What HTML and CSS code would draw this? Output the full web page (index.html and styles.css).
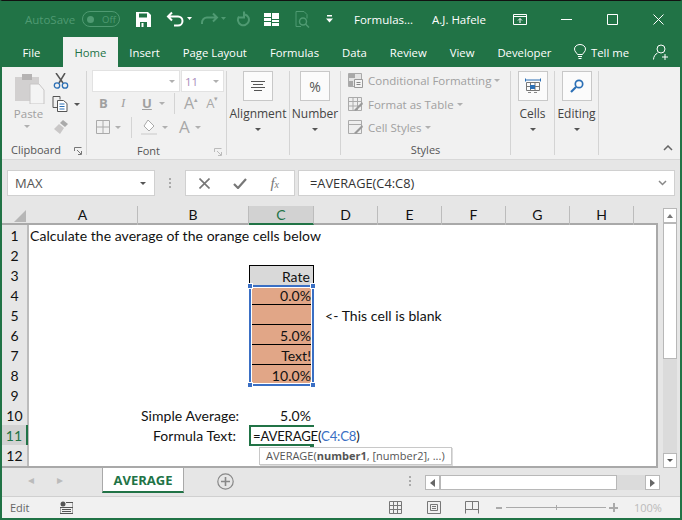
FILE: index.html
```html
<!DOCTYPE html>
<html lang="en">
<head>
    <meta charset="UTF-8">
    <title>Formulas - AVERAGE</title>
    <link rel="stylesheet" href="styles.css">
</head>
<body>
<div class="app">
    <div class="titlebar">
        <span class="autosave">AutoSave</span>
        <span class="toggle"><i></i>Off</span>
        <svg class="qat save" width="15" height="15" viewBox="0 0 15 15"><path d="M0 0h12l3 3v12H0z" fill="#fff"/><path d="M3 1.500h8v4H3zM4 10h7v5H4z" fill="#217346"/><path d="M5.500 11h2v4h-2z" fill="#fff"/></svg>
        <svg class="qat undo" width="26" height="16" viewBox="0 0 26 16"><path d="M6 1.500 2 5.500l4 4M2 5.500h10a4.500 4.500 0 0 1 0 9H8" fill="none" stroke="#fff" stroke-width="2"/><path d="M21 6h5l-2.500 3z" fill="#fff"/></svg>
        <svg class="qat redo" width="26" height="16" viewBox="0 0 26 16"><path d="M13 2.500l4 4-4 4M17 6.500H7a5 5 0 0 0-5 5V13" fill="none" stroke="#4f9a72" stroke-width="2"/><path d="M21 6h5l-2.500 3z" fill="#4f9a72"/></svg>
        <svg class="qat repeat" width="14" height="16" viewBox="0 0 14 16"><path d="M9 3.500a5.500 5.500 0 1 1-6 2M8 .5v6H2" fill="none" stroke="#4f9a72" stroke-width="2"/></svg>
        <svg class="qat grid4" width="15" height="13" viewBox="0 0 15 13"><path d="M0 0h7v4H0zM8 0h7v6H8zM0 5h7v3H0zM0 9h7v4H0zM8 7h7v2H8zM8 10h7v3H8z" fill="#fff"/></svg>
        <svg class="qat preview" width="15" height="17" viewBox="0 0 15 17"><path d="M1 .5h8l3 3v4M1 .5v15h5" fill="none" stroke="#4f9a72"/><circle cx="8" cy="10.500" r="3.500" fill="none" stroke="#4f9a72" stroke-width="1.500"/><path d="M10.500 13l3.500 3.500" stroke="#4f9a72" stroke-width="1.500"/></svg>
        <svg class="qat custom" width="7" height="8" viewBox="0 0 7 8"><path d="M1 0h5v1.500H1zM0 3.500h7L3.500 7.500z" fill="#fff"/></svg>
        <span class="doc-name">Formulas...</span>
        <span class="user-name">A.J. Hafele</span>
        <svg class="win ribbon-opts" width="14" height="11" viewBox="0 0 14 11"><path d="M.5.500h13v10H.5zM.5 2.500h13M7 9V4.500M5 6.500l2-2 2 2" fill="none" stroke="#fff"/></svg>
        <svg class="win minimize" width="11" height="11" viewBox="0 0 11 11"><path d="M0 5.500h11" stroke="#fff"/></svg>
        <svg class="win maximize" width="11" height="11" viewBox="0 0 11 11"><path d="M.5.500h10v10H.5z" fill="none" stroke="#fff"/></svg>
        <svg class="win close" width="11" height="11" viewBox="0 0 11 11"><path d="M.5.500l10 10M10.500.5l-10 10" stroke="#fff"/></svg>
    </div>

    <div class="tabs">
        <span class="tab first">File</span>
        <span class="tab active">Home</span>
        <span class="tab">Insert</span>
        <span class="tab">Page Layout</span>
        <span class="tab">Formulas</span>
        <span class="tab">Data</span>
        <span class="tab">Review</span>
        <span class="tab">View</span>
        <span class="tab">Developer</span>
        <svg class="bulb" width="12" height="16" viewBox="0 0 12 16"><path d="M3.500 10.500C2.500 8.500.5 7.500.5 5a5.500 4.500 0 0 1 11 0c0 2.500-2 3.500-3 5.500zM4 12.500h4M4.500 14.500h3" fill="none" stroke="#fff"/></svg>
        <span class="tell">Tell me</span>
        <svg class="person" width="16" height="16" viewBox="0 0 16 16"><circle cx="8" cy="5" r="4" fill="none" stroke="#fff"/><path d="M.5 15.500c0-3 2-5.500 4-6.500M9 13h6M12 10v6" fill="none" stroke="#fff"/></svg>
    </div>

    <div class="ribbon">
        <div class="group clipboard">
            <div class="group-body clip-body">
                <div class="paste">
                    <svg width="30" height="31" viewBox="0 0 30 31"><path d="M0 4h24v24H0z" fill="#d2d0d0"/><path d="M7 1h10v6H7z" fill="#b5b3b3"/><path d="M15 11h9l5 6v14H15z" fill="#f4f4f4" stroke="#c8c6c6"/></svg>
                    <span>Paste</span>
                    <i class="caret light"></i>
                </div>
                <div class="clip-tools">
                    <svg width="16" height="16" viewBox="0 0 16 16"><path d="M3 0l7 10M12 0L6 10" stroke="#555" stroke-width="1.500"/><circle cx="4" cy="12.500" r="2.700" fill="none" stroke="#2b6fb5" stroke-width="1.300"/><circle cx="12" cy="12.500" r="2.700" fill="none" stroke="#2b6fb5" stroke-width="1.300"/></svg>
                    <div class="copy-row">
                        <svg width="16" height="16" viewBox="0 0 16 16"><path d="M1 .5h7v3M1 .5v11h4" fill="none" stroke="#555"/><path d="M5.500 4.500h6l3.500 3v8H5.500z" fill="#fff" stroke="#555"/><path d="M7.500 8h5M7.500 10.500h5M7.500 13h5" stroke="#2b6fb5"/></svg>
                        <i class="caret"></i>
                    </div>
                    <svg width="16" height="16" viewBox="0 0 16 16"><path d="M10 1l5 4-3 3-5-4z" fill="#aaa"/><path d="M6 5l5 4-4 6-6-5z" fill="#c9c7c7"/></svg>
                </div>
            </div>
            <div class="group-label">Clipboard<svg class="launcher" width="8" height="8" viewBox="0 0 8 8"><path d="M.5 4V.5H7.500M3 3l4 4M7.500 4v3.500H4" fill="none" stroke="#777"/></svg></div>
        </div>

        <div class="group font">
            <div class="group-body font-body">
                <div class="font-row combos">
                    <span class="combo name"><i class="caret light"></i></span>
                    <span class="combo size">11<i class="caret light"></i></span>
                </div>
                <div class="font-row styles-row">
                    <b>B</b><em>I</em><u>U</u><i class="caret light"></i>
                    <span class="vrule"></span>
                    <span class="big">A<sup>▴</sup></span><span class="small">A<sup>▾</sup></span>
                </div>
                <div class="font-row fills">
                    <svg width="14" height="14" viewBox="0 0 14 14"><path d="M.5.500h13v13H.5zM7 .5v13M.5 7h13" fill="none" stroke="#aaa"/></svg>
                    <i class="caret light"></i>
                    <span class="vrule"></span>
                    <svg width="16" height="16" viewBox="0 0 16 16"><path d="M7 1l6 6-5 5-5-5z" fill="#fff" stroke="#aaa"/><path d="M0 14h16v2H0z" fill="#ddd"/></svg>
                    <i class="caret light"></i>
                    <span class="big">A</span>
                    <i class="caret light"></i>
                </div>
            </div>
            <div class="group-label">Font<svg class="launcher" width="8" height="8" viewBox="0 0 8 8"><path d="M.5 4V.5H7.500M3 3l4 4M7.500 4v3.500H4" fill="none" stroke="#bbb"/></svg></div>
        </div>

        <div class="group collapsed alignment">
            <span class="big-btn"><svg width="16" height="11" viewBox="0 0 16 11"><path d="M1 .5h14M3 3.500h10M1 6.500h14M4 9.500h8" stroke="#555"/></svg></span>
            <span class="collapsed-name">Alignment</span>
            <i class="caret"></i>
        </div>

        <div class="group collapsed number">
            <span class="big-btn percent">%</span>
            <span class="collapsed-name">Number</span>
            <i class="caret"></i>
        </div>

        <div class="group styles">
            <div class="group-body styles-body">
                <div class="style-item">
                    <svg width="15" height="15" viewBox="0 0 15 15"><path d="M.5.500h13v13H.5z" fill="#e4e4e4" stroke="#aaa"/><path d="M1 1h6v4H1zM1 8h4v5H1z" fill="#a8a8a8"/><path d="M6.500 6.500h8v8h-8z" fill="#f4f4f4" stroke="#999"/><path d="M8.500 9.500h4M8.500 11.500h4" stroke="#888"/></svg>
                    Conditional Formatting<i class="caret light"></i>
                </div>
                <div class="style-item">
                    <svg width="15" height="15" viewBox="0 0 15 15"><path d="M.5.500h13v13H.5zM.5 4.500h13M.5 9h13M5 .5v13M9.500.5v13" fill="#eee" stroke="#aaa"/><path d="M6 13l8-8 1 2-7 7z" fill="#999"/></svg>
                    Format as Table<i class="caret light"></i>
                </div>
                <div class="style-item">
                    <svg width="15" height="15" viewBox="0 0 15 15"><path d="M.5.500h13v13H.5zM.5 4.500h13" fill="#eee" stroke="#aaa"/><path d="M6 13l8-8 1 2-7 7z" fill="#999"/></svg>
                    Cell Styles<i class="caret light"></i>
                </div>
            </div>
            <div class="group-label">Styles</div>
        </div>

        <div class="group collapsed cells">
            <span class="big-btn"><svg width="16" height="16" viewBox="0 0 16 16"><path d="M.5.500v3M15.500.5v3M1 2h14" stroke="#2b6fb5"/><path d="M1.500 4.500h13v8h-13zM1.500 8.500h13M5.500 4.500v8M10 4.500v8" fill="none" stroke="#777"/><path d="M5 7h5v4H5z" fill="#2b6fb5"/><path d="M3 14.500h3M9 14.500h3" stroke="#888"/></svg></span>
            <span class="collapsed-name">Cells</span>
            <i class="caret"></i>
        </div>

        <div class="group collapsed editing">
            <span class="big-btn"><svg width="14" height="14" viewBox="0 0 14 14"><circle cx="9" cy="5" r="3.700" fill="none" stroke="#2b6fb5" stroke-width="1.700"/><path d="M6 8l-5 5" stroke="#2b6fb5" stroke-width="2.200"/></svg></span>
            <span class="collapsed-name">Editing</span>
            <i class="caret"></i>
        </div>

        <svg class="ribbon-collapse" width="10" height="6" viewBox="0 0 10 6"><path d="M1 5l4-4 4 4" fill="none" stroke="#666" stroke-width="1.500"/></svg>
    </div>

    <div class="formula-bar">
        <div class="name-box">MAX<i class="caret"></i></div>
        <span class="dots"></span>
        <div class="fx-buttons">
            <svg width="11" height="11" viewBox="0 0 11 11"><path d="M.5.500l10 10M10.500.5l-10 10" stroke="#777" stroke-width="1.600"/></svg>
            <svg width="14" height="11" viewBox="0 0 14 11"><path d="M1 6l4 4 8-9" fill="none" stroke="#777" stroke-width="2.200"/></svg>
            <span class="fx">f<small>x</small></span>
        </div>
        <div class="formula-input">=AVERAGE(C4:C8)
            <svg width="9" height="6" viewBox="0 0 9 6"><path d="M1 1l3.500 3.500L8 1" fill="none" stroke="#888" stroke-width="1.500"/></svg>
        </div>
    </div>

    <div class="workspace">
        <div class="sheet-pane">
            <div class="sheet-row col-heads">
                <span class="corner"><i></i></span>
                <span>A</span><span>B</span><span class="col-sel">C</span><span>D</span><span>E</span><span>F</span><span>G</span><span>H</span>
            </div>
            <div class="cells-area">
                <div class="sheet-row"><span class="rh">1</span><span class="cell a">Calculate the average of the orange cells below</span></div>
                <div class="sheet-row"><span class="rh">2</span></div>
                <div class="sheet-row"><span class="rh">3</span><span class="cell c head-cell">Rate</span></div>
                <div class="sheet-row"><span class="rh">4</span><span class="cell c orange">0.0%</span></div>
                <div class="sheet-row"><span class="rh">5</span><span class="cell c orange"></span><span class="cell d note">&lt;- This cell is blank</span></div>
                <div class="sheet-row"><span class="rh">6</span><span class="cell c orange">5.0%</span></div>
                <div class="sheet-row"><span class="rh">7</span><span class="cell c orange">Text!</span></div>
                <div class="sheet-row"><span class="rh">8</span><span class="cell c orange">10.0%</span></div>
                <div class="sheet-row"><span class="rh">9</span></div>
                <div class="sheet-row"><span class="rh">10</span><span class="cell b label">Simple Average:</span><span class="cell c">5.0%</span></div>
                <div class="sheet-row"><span class="rh rh-sel">11</span><span class="cell b label">Formula Text:</span><span class="cell c editing-cell">=AVERAGE(<span class="ref">C4:C8</span>)</span></div>
                <div class="sheet-row"><span class="rh">12</span></div>

                <div class="selection">
                    <i class="tl"></i><i class="tr"></i><i class="bl"></i><i class="br"></i>
                </div>
                <div class="tip">AVERAGE(<b>number1</b>, [number2], ...)</div>
            </div>
        </div>
        <div class="vscroll">
            <span class="sbtn"><i class="caret up"></i></span>
            <span class="vthumb"></span>
            <span class="vtrack"></span>
            <span class="sbtn"><i class="caret"></i></span>
        </div>
    </div>

    <div class="sheet-tabs">
        <span class="nav-arrow">◂</span><span class="nav-arrow">▸</span>
        <span class="sheet-tab">AVERAGE</span>
        <svg class="add-sheet" width="17" height="17" viewBox="0 0 17 17"><circle cx="8.500" cy="8.500" r="7.700" fill="none" stroke="#888" stroke-width="1.200"/><path d="M8.500 4v9M4 8.500h9" stroke="#888" stroke-width="1.600"/></svg>
        <span class="dots"></span>
        <div class="hscroll">
            <span class="sbtn"><i class="tri left"></i></span>
            <span class="hthumb"></span>
            <span class="htrack"></span>
            <span class="sbtn"><i class="tri right"></i></span>
        </div>
    </div>

    <div class="statusbar">
        <span class="mode">Edit</span>
        <svg class="macro" width="13" height="13" viewBox="0 0 13 13"><circle cx="3" cy="3" r="2.500" fill="#555"/><path d="M6 1.500h7v11H0V6.500h13M2 8.500h9M2 10.500h9" fill="none" stroke="#555"/></svg>
        <svg class="view v1" width="13" height="13" viewBox="0 0 13 13"><path d="M.5.500h12v12H.5zM4.500.5v12M8.500.5v12M.5 4.500h12M.5 8.500h12" fill="none" stroke="#777"/></svg>
        <svg class="view v2" width="14" height="13" viewBox="0 0 14 13"><path d="M.5.500h13v12H.5zM3.500 3.500h7v6h-7zM5 5.500h4M5 7.500h4" fill="none" stroke="#777"/></svg>
        <svg class="view v3" width="14" height="13" viewBox="0 0 14 13"><path d="M.5 12.500V.5h13v12M.5 8.500h7V.5M7.500 8.500h6" fill="none" stroke="#777"/></svg>
        <span class="zoom-minus"></span>
        <span class="slider"><i></i></span>
        <span class="zoom-plus"></span>
        <span class="zoom-pct">100%</span>
    </div>
</div>
</body>
</html>
```

FILE: styles.css
```css
* {
    box-sizing: border-box;
}

body {
    margin: 0;
    font-family: "Open Sans", "Noto Sans", sans-serif;
    font-size: 12px;
    color: #444;
}

.app {
    width: 682px;
    height: 520px;
    display: flex;
    flex-direction: column;
    position: relative;
    overflow: hidden;
    background: #e6e6e6;
    border: 2px solid #217346;
    border-top: 1px solid #111;
}

/* title bar */
.titlebar {
    height: 36px;
    flex: none;
    margin: 0 -2px;
    padding-left: 25px;
    display: flex;
    align-items: center;
    background: #217346;
    color: #fff;
}

.autosave {
    width: 57px;
    color: #4f9a72;
    font-size: 11.500px;
}

.toggle {
    width: 38px;
    height: 16px;
    display: flex;
    align-items: center;
    gap: 8px;
    padding-left: 4px;
    border: 1px solid #4f9a72;
    border-radius: 8px;
    color: #4f9a72;
    font-size: 9.500px;
}

.toggle i {
    width: 7px;
    height: 7px;
    border-radius: 50%;
    background: #4f9a72;
}

.qat {
    flex: none;
}

.save { margin-left: 16px; }
.undo { margin-left: 15px; }
.redo { margin-left: 8px; }
.repeat { margin-left: 10px; }
.grid4 { margin-left: 14px; }
.preview { margin-left: 16px; }
.custom { margin-left: 16px; }

.doc-name {
    width: 60px;
    margin-left: 21px;
    font-size: 11.500px;
    white-space: nowrap;
}

.user-name {
    width: 60px;
    margin-left: 18px;
    font-size: 11.500px;
    white-space: nowrap;
}

.ribbon-opts { margin-left: 21px; }
.minimize { margin-left: 34px; }
.maximize { margin-left: 35px; }
.close { margin-left: 35px; }

/* tabs */
.tabs {
    height: 30px;
    flex: none;
    margin: 0 -2px;
    padding-left: 11px;
    display: flex;
    align-items: center;
    background: #217346;
    color: #fff;
}

.tab {
    height: 30px;
    display: flex;
    align-items: center;
    padding: 0 11.500px;
    font-size: 11.300px;
    white-space: nowrap;
}

.tab.first {
    padding-right: 11.500px;
    margin-right: 11px;
}

.tab.active {
    background: #f1f1f1;
    color: #217346;
}

.bulb {
    margin-left: 11px;
}

.tell {
    margin-left: 5px;
    font-size: 11.300px;
    white-space: nowrap;
}

.person {
    margin-left: 24px;
}

/* ribbon */
.ribbon {
    height: 93px;
    flex: none;
    display: flex;
    position: relative;
    background: #f1f1f1;
    border-bottom: 1px solid #d8d8d8;
}

.group {
    position: relative;
    display: flex;
    flex-direction: column;
    align-items: center;
    margin: 4px 0;
    border-right: 1px solid #d4d4d4;
}

.group-body {
    flex: 1;
    width: 100%;
}

.group-label {
    width: 100%;
    height: 17px;
    position: relative;
    text-align: center;
    font-size: 11px;
    line-height: 24px;
    color: #555;
}

.clipboard .group-label,
.font .group-label {
    padding-right: 16px;
}

.launcher {
    position: absolute;
    right: 4px;
    top: 9px;
}

.caret {
    display: inline-block;
    width: 0;
    height: 0;
    border-left: 3.500px solid transparent;
    border-right: 3.500px solid transparent;
    border-top: 3.500px solid #555;
}

.caret.light {
    border-top-color: #b0b0b0;
}

.caret.up {
    border-top: 0;
    border-bottom: 4px solid #777;
}

.clipboard {
    width: 85px;
}

.clip-body {
    display: flex;
    padding: 2px 0 0 13px;
}

.paste {
    width: 30px;
    display: flex;
    flex-direction: column;
    align-items: center;
    color: #a0a0a0;
    font-size: 11.500px;
}

.paste span {
    margin: 2px 3px 0 0;
}

.paste .caret {
    margin: 4px 6px 0 0;
}

.clip-tools {
    margin-left: 8px;
    display: flex;
    flex-direction: column;
    gap: 7px;
}

.copy-row {
    display: flex;
    align-items: center;
    gap: 6px;
    margin-left: -1px;
}

.font {
    width: 140px;
}

.font-body {
    margin-top: -1px;
    padding-left: 5px;
    display: flex;
    flex-direction: column;
}

.font-row {
    display: flex;
    align-items: center;
}

.combos {
    gap: 1px;
    height: 22px;
    flex: none;
}

.combo {
    height: 22px;
    display: flex;
    align-items: center;
    justify-content: flex-end;
    padding-right: 4px;
    background: #fff;
    border: 1px solid #e2e2e2;
}

.combo.name { width: 88px; }

.combo.size {
    width: 43px;
    justify-content: space-between;
    padding-left: 3px;
    color: #a98dbb;
    font-size: 11.500px;
}

.styles-row {
    height: 22px;
    flex: none;
    padding-left: 7px;
    color: #a0a0a0;
    font-size: 13px;
}

.styles-row b { width: 22px; }
.styles-row em { width: 21px; font-family: "Liberation Serif", serif; }
.styles-row u { width: 17px; font-weight: 700; }

.vrule {
    width: 1px;
    height: 21px;
    margin: 0 9px;
    background: #d4d4d4;
}

.big {
    font-size: 16px;
    color: #a8a8a8;
    line-height: 16px;
}

.big sup,
.small sup {
    font-size: 7px;
    vertical-align: 7px;
    line-height: 0;
}

.small {
    margin-left: 8px;
    font-size: 13px;
    color: #a8a8a8;
}

.fills {
    height: 24px;
    flex: none;
    margin-top: 1px;
    padding-left: 4px;
    gap: 5px;
}

.fills .vrule {
    margin: 0 4px 0 5px;
}

.fills .big {
    margin-left: 6px;
    font-size: 17px;
}

.collapsed {
    color: #444;
}

.big-btn {
    width: 30px;
    height: 30px;
    display: flex;
    align-items: center;
    justify-content: center;
    background: #fbfbfb;
    border: 1px solid #c8c8c8;
}

.percent {
    font-size: 14px;
    color: #555;
}

.collapsed-name {
    margin-top: 4px;
    font-size: 12px;
    line-height: 18px;
}

.collapsed .caret {
    margin-top: 5px;
}

.alignment { width: 63px; }
.number { width: 51px; }
.styles { width: 170px; }
.cells { width: 44px; }
.editing { width: 44px; }

.styles-body {
    padding: 2px 0 0 7px;
    display: flex;
    flex-direction: column;
    gap: 8.500px;
}

.style-item {
    height: 15px;
    display: flex;
    align-items: center;
    gap: 5px;
    color: #a0a0a0;
    font-size: 11.500px;
    white-space: nowrap;
}

.style-item .caret {
    margin-left: -2px;
    border-width: 3px 3px 0;
}

.ribbon-collapse {
    position: absolute;
    right: 7px;
    bottom: 8px;
}

/* formula bar */
.formula-bar {
    height: 46px;
    flex: none;
    display: flex;
    align-items: flex-start;
    padding: 10px 5px 0;
    background: #e6e6e6;
}

.name-box {
    width: 148px;
    height: 26px;
    display: flex;
    align-items: center;
    justify-content: space-between;
    padding: 0 8px 0 7px;
    background: #fff;
    border: 1px solid #d0d0d0;
    font-size: 13px;
    color: #555;
}

.dots {
    width: 2px;
    height: 10px;
    margin: 8px 14px 0;
    background: repeating-linear-gradient(#aaa 0 2px, transparent 2px 4px);
}

.fx-buttons {
    width: 110px;
    height: 26px;
    display: flex;
    align-items: center;
    justify-content: space-between;
    padding: 0 15px 0 13px;
    background: #fff;
    border: 1px solid #d0d0d0;
}

.fx {
    font-family: "Liberation Serif", serif;
    font-style: italic;
    font-size: 15px;
    color: #777;
}

.fx small {
    font-size: 10px;
}

.formula-input {
    width: 377px;
    height: 26px;
    margin-left: 3px;
    display: flex;
    align-items: center;
    justify-content: space-between;
    padding: 0 7px 0 11px;
    background: #fff;
    border: 1px solid #d0d0d0;
    font-size: 12.800px;
    color: #333;
}

/* sheet */
.workspace {
    height: 262px;
    flex: none;
    display: flex;
    min-height: 0;
}

.sheet-pane {
    width: 656px;
    flex: none;
    display: flex;
    flex-direction: column;
    font-family: Lato, "Open Sans", sans-serif;
    font-size: 14px;
    letter-spacing: 0.05px;
    color: #111;
}

.sheet-row {
    height: 20px;
    flex: none;
    display: grid;
    grid-template-columns: 26px 110px 111px 65px 64px 64px 64px 64px 64px 24px;
}

.sheet-row.col-heads {
    height: 19px;
    background: #e6e6e6;
    border-bottom: 2px solid #a9a9a9;
}

.col-heads span {
    height: 19px;
    text-align: center;
    line-height: 18px;
    border-right: 1px solid #bcbcbc;
}

.col-heads .corner {
    position: relative;
    border-right: 0;
}

.corner i {
    position: absolute;
    right: 2px;
    bottom: 3px;
    width: 0;
    height: 0;
    border-left: 12px solid transparent;
    border-bottom: 12px solid #b6b6b6;
}

.col-heads .col-sel {
    background: #d2d2d2;
    color: #217346;
    border-bottom: 2px solid #217346;
}

.cells-area {
    flex: 1;
    min-height: 0;
    position: relative;
    overflow: hidden;
    background: #fff;
    border-right: 2px solid #a9a9a9;
    border-bottom: 2px solid #a9a9a9;
}

.cells-area::before {
    content: "";
    position: absolute;
    left: 0;
    top: 0;
    bottom: 0;
    width: 26px;
    background: #e6e6e6;
    border-right: 1px solid #bcbcbc;
}

.rh {
    grid-column: 1;
    position: relative;
    text-align: center;
    line-height: 21px;
    background: #e6e6e6;
    border-right: 1px solid #bcbcbc;
    border-bottom: 1px solid #cfcfcf;
}

.rh-sel {
    background: #d2d2d2;
    color: #217346;
    border-right: 2px solid #217346;
}

.cell {
    padding: 0 3px;
    line-height: 22px;
    white-space: nowrap;
}

.cell.a { grid-column: 2; padding-left: 2px; }
.cell.b { grid-column: 3; }
.cell.c { grid-column: 4; text-align: right; }
.cell.d { grid-column: 5; }

.cell.label {
    padding-right: 13px;
    text-align: right;
}

.cell.note {
    padding-left: 11px;
}

.head-cell {
    background: #d9d9d9;
    border: 1px solid #000;
    border-bottom: 0;
}

.orange {
    height: 20px;
    background: #e1a687;
    border-bottom: 1px solid #000;
}

.cell.editing-cell {
    position: relative;
    height: 21px;
    text-align: left;
    border: 2px solid #217346;
    border-right: 0;
    background: #fff;
    font-size: 13.200px;
    letter-spacing: -0.2px;
    line-height: 18px;
    padding-left: 2px;
}

/* fill handle under the active cell */
.editing-cell::after {
    content: "";
    position: absolute;
    right: 0;
    bottom: -3px;
    width: 4px;
    height: 3px;
    background: #217346;
}

.ref {
    color: #3a6fc4;
}

.selection {
    position: absolute;
    left: 247px;
    top: 60px;
    width: 65px;
    height: 101px;
    border: 2px solid #3a6fc4;
    box-shadow: inset 0 0 0 1px #fff;
}

.selection i {
    position: absolute;
    width: 6px;
    height: 6px;
    background: #3a6fc4;
    border: 1px solid #fff;
}

.tl { left: -4px; top: -4px; }
.tr { right: -4px; top: -4px; }
.bl { left: -4px; bottom: -4px; }
.br { right: -4px; bottom: -4px; }

.tip {
    position: absolute;
    left: 257px;
    top: 222px;
    height: 18px;
    padding: 0 6px;
    background: #fff;
    border: 1px solid #c8c8c8;
    box-shadow: 1px 1px 0 #ddd;
    font-family: "Open Sans", sans-serif;
    font-size: 11px;
    letter-spacing: 0;
    line-height: 15px;
    color: #555;
    white-space: nowrap;
}

.vscroll {
    width: 14px;
    margin: 2px 0 0 5px;
    display: flex;
    flex-direction: column;
    background: #dbdbdb;
}

.sbtn {
    width: 14px;
    height: 15px;
    flex: none;
    display: flex;
    align-items: center;
    justify-content: center;
    background: #fff;
    border: 1px solid #b8b8b8;
}

.vthumb {
    height: 136px;
    flex: none;
    background: #fff;
    border: 1px solid #b8b8b8;
}

.vtrack {
    flex: 1;
}

/* sheet tabs */
.sheet-tabs {
    height: 29px;
    flex: none;
    display: flex;
    align-items: flex-start;
    background: #e6e6e6;
    border-bottom: 1px solid #d0d0d0;
}

.nav-arrow {
    width: 29px;
    color: #bbb;
    font-size: 12px;
    line-height: 24px;
    text-align: center;
}

.nav-arrow:first-child {
    margin-left: 14px;
}

.sheet-tab {
    width: 82px;
    height: 25px;
    margin-left: 28px;
    background: #fff;
    border: 1px solid #a9a9a9;
    border-top: 0;
    border-bottom: 2px solid #217346;
    text-align: center;
    color: #217346;
    font-weight: 700;
    font-size: 13px;
    line-height: 24px;
}

.add-sheet {
    margin: 5px 0 0 33px;
}

.sheet-tabs .dots {
    margin: 8px 0 0 175px;
}

.hscroll {
    width: 235px;
    height: 15px;
    margin: 7px 0 0 14px;
    display: flex;
    background: #dbdbdb;
}

.hthumb {
    width: 177px;
    background: #fff;
    border: 1px solid #b8b8b8;
}

.htrack {
    flex: 1;
}

.hscroll .sbtn {
    width: 15px;
}

.tri {
    width: 0;
    height: 0;
    border-top: 4px solid transparent;
    border-bottom: 4px solid transparent;
}

.tri.left { border-right: 5px solid #666; }
.tri.right { border-left: 5px solid #666; }

/* status bar */
.statusbar {
    height: 21px;
    flex: none;
    display: flex;
    align-items: center;
    padding-left: 8px;
    background: #f1f1f1;
    color: #666;
    font-size: 11px;
}

.mode { width: 50px; }
.v1 { margin-left: 316px; }
.v2 { margin-left: 25px; }
.v3 { margin-left: 24px; }

.zoom-minus {
    width: 6px;
    height: 2px;
    margin-left: 17px;
    background: #aaa;
}

.slider {
    width: 100px;
    height: 1px;
    margin-left: 4px;
    position: relative;
    background: #aaa;
}

.slider i {
    position: absolute;
    left: 50px;
    top: -2px;
    width: 1px;
    height: 5px;
    background: #aaa;
}

.zoom-plus {
    width: 9px;
    height: 9px;
    margin-left: 3px;
    background: linear-gradient(#aaa, #aaa) center / 9px 2px no-repeat, linear-gradient(#aaa, #aaa) center / 2px 9px no-repeat;
}

.zoom-pct {
    margin-left: 16px;
    color: #bbb;
}
```
